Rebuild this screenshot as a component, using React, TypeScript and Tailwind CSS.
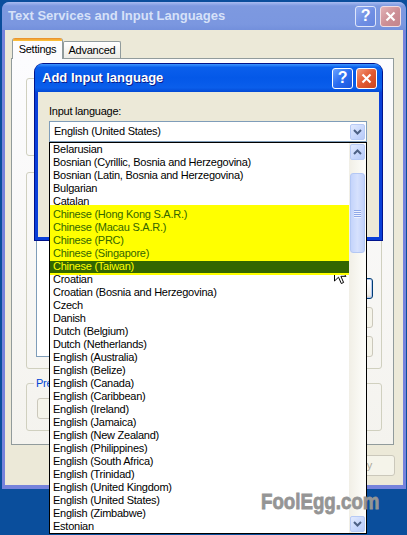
import React from "react";

const items = [
  "Belarusian",
  "Bosnian (Cyrillic, Bosnia and Herzegovina)",
  "Bosnian (Latin, Bosnia and Herzegovina)",
  "Bulgarian",
  "Catalan",
  "Chinese (Hong Kong S.A.R.)",
  "Chinese (Macau S.A.R.)",
  "Chinese (PRC)",
  "Chinese (Singapore)",
  "Chinese (Taiwan)",
  "Croatian",
  "Croatian (Bosnia and Herzegovina)",
  "Czech",
  "Danish",
  "Dutch (Belgium)",
  "Dutch (Netherlands)",
  "English (Australia)",
  "English (Belize)",
  "English (Canada)",
  "English (Caribbean)",
  "English (Ireland)",
  "English (Jamaica)",
  "English (New Zealand)",
  "English (Philippines)",
  "English (South Africa)",
  "English (Trinidad)",
  "English (United Kingdom)",
  "English (United States)",
  "English (Zimbabwe)",
  "Estonian",
];

function Chevron({ up }: { up?: boolean }) {
  return (
    <svg width="9" height="6" viewBox="0 0 9 6">
      <polyline
        points={up ? "1,5 4.5,1.5 8,5" : "1,1 4.5,4.5 8,1"}
        fill="none"
        stroke="#4d6185"
        strokeWidth="2"
      />
    </svg>
  );
}

function ScrollBtn({ up }: { up?: boolean }) {
  return (
    <div className="w-[15px] h-[16px] rounded-[2px] border border-[#b7caf5] bg-[linear-gradient(135deg,#e2eafe,#c6d6fc_60%,#b8cbf8)] flex items-center justify-center">
      <Chevron up={up} />
    </div>
  );
}

function TitleBtn({ kind, active }: { kind: "help" | "close"; active: boolean }) {
  const cls =
    kind === "help"
      ? active
        ? "bg-[linear-gradient(135deg,#6aa3ff,#2a6cf0_50%,#1b55db)] border-white"
        : "bg-[linear-gradient(135deg,#95aef0,#6f8fe4_55%,#6585df)] border-[#dfe6fa]"
      : active
      ? "bg-[linear-gradient(135deg,#f39a7a,#e35a33_50%,#c9441f)] border-white"
      : "bg-[linear-gradient(135deg,#e2b2b6,#cc8e95_55%,#c4848c)] border-[#f0dde2]";
  return (
    <div
      className={`w-[21px] h-[21px] rounded-[3px] border flex items-center justify-center ${cls}`}
    >
      {kind === "help" ? (
        <span className="text-white font-bold text-[16px] leading-[16px] font-['Liberation_Sans',Arial,sans-serif]">?</span>
      ) : (
        <svg width="11" height="11" viewBox="0 0 11 11">
          <line x1="1.5" y1="1.5" x2="9.5" y2="9.5" stroke="#fff" strokeWidth="2.2" />
          <line x1="9.5" y1="1.5" x2="1.5" y2="9.5" stroke="#fff" strokeWidth="2.2" />
        </svg>
      )}
    </div>
  );
}

function XPButton({ children, disabled, def, className = "" }: { children?: React.ReactNode; disabled?: boolean; def?: boolean; className?: string }) {
  const cls = disabled
    ? "border-[#cbc8bb] bg-[#f5f4ea] text-[#aca899]"
    : def
    ? "border-[#003c74] bg-[linear-gradient(to_bottom,#ffffff,#f0efea_80%,#d8d2c6)] text-black shadow-[inset_0_0_0_1px_#b4c8f0]"
    : "border-[#003c74] bg-[linear-gradient(to_bottom,#ffffff,#f0efea_80%,#d8d2c6)] text-black";
  return (
    <div className={`h-[21px] rounded-[3px] border flex items-center justify-center ${cls} ${className}`}>
      {children}
    </div>
  );
}

export default function App() {
  return (
    <div className="relative w-[407px] h-[535px] overflow-hidden bg-[#0a4e9c] font-['Liberation_Sans',Arial,sans-serif] text-[11px] tracking-[-0.25px] text-black">
      {/* Background window (inactive) */}
      <div className="absolute left-[2px] top-[2px] w-[404px] h-[487px] flex flex-col rounded-t-[8px] bg-[#7683dc]">
        <div className="h-[28px] shrink-0 flex items-center pl-[6px] pr-[5px] gap-[4px] rounded-t-[7px] bg-[linear-gradient(to_bottom,#a9bcf1,#7d99e0_14%,#7b97e0_80%,#7390dc)]">
          <span className="flex-1 font-bold text-[13px] tracking-normal text-[#d6e1f8]">
            Text Services and Input Languages
          </span>
          <TitleBtn kind="help" active={false} />
          <TitleBtn kind="close" active={false} />
        </div>
        <div className="flex-1 mx-[3px] mb-[4px] bg-[#ece9d8] flex flex-col pt-[8px] pl-[6px] pr-[9px]">
          {/* tabs */}
          <div className="h-[20px] flex items-end relative z-10">
            <div className="ml-[1px] w-[51px] h-[21px] -mb-[1px] border-x border-[#919b9c] rounded-t-[3px] bg-[#fcfcfe] flex flex-col">
              <div className="h-[3px] rounded-t-[2px] bg-[linear-gradient(to_bottom,#e68b2c,#ffc73c)]" />
              <div className="flex-1 flex items-center justify-center pb-[2px]">Settings</div>
            </div>
            <div className="w-[58px] h-[17px] border-x border-t border-[#919b9c] rounded-t-[2px] bg-[linear-gradient(to_bottom,#ffffff,#ecebe6)] flex items-center justify-center">
              Advanced
            </div>
          </div>
          {/* panel */}
          <div className="h-[387px] border border-[#919b9c] bg-[linear-gradient(to_bottom,#fcfcfe,#f4f3ee)] pt-[13px] pl-[14px] pr-[11px] flex flex-col">
            <fieldset className="border border-[#d0d0bf] rounded-[3px] pl-[7px] pr-[8px]">
              <legend className="px-[2px] h-[13px] w-[120px]" />
              <div className="h-[70px]" />
            </fieldset>
            <fieldset className="mt-[10px] border border-[#d0d0bf] rounded-[3px] pl-[7px] pr-[8px]">
              <legend className="px-[2px] h-[13px] w-[90px]" />
              <div className="mt-[7px] mb-[11px] h-[171px] pl-[2px] flex gap-[8px]">
                <div className="flex-1 border border-[#7f9db9] bg-white" />
                <div className="w-[75px] flex flex-col justify-end gap-[8px]">
                  <XPButton def />
                  <XPButton disabled />
                  <XPButton disabled />
                </div>
              </div>
            </fieldset>
            <fieldset className="mt-[8px] border border-[#d0d0bf] rounded-[3px] pl-[7px] pr-[8px]">
              <legend className="px-[2px] leading-[13px] text-[#0046d5]">Pre</legend>
              <div className="mt-[8px] mb-[11px] pl-[3px] flex gap-[8px]">
                <XPButton disabled className="w-[100px]" />
                <XPButton disabled className="w-[100px]" />
              </div>
            </fieldset>
          </div>
          <div className="mt-[10px] flex justify-end gap-[6px] -mr-[1px]">
            <XPButton def className="w-[75px]" />
            <XPButton className="w-[75px]" />
            <XPButton disabled className="w-[75px] justify-end pr-[22px]">y</XPButton>
          </div>
        </div>
      </div>

      {/* Foreground dialog */}
      <div className="absolute left-[35px] top-[64px] w-[347px] h-[176px] flex flex-col rounded-t-[8px] bg-[#0a3fd8] shadow-[0_0_0_1px_#00138c]">
        <div className="h-[28px] shrink-0 flex items-center pl-[7px] pr-[5px] gap-[3px] rounded-t-[7px] bg-[linear-gradient(to_bottom,#3d95ff,#0a5fec_12%,#0458e8_50%,#0a5eeb_85%,#0349d4)]">
          <span className="flex-1 font-bold text-[13px] tracking-normal text-white [text-shadow:1px_1px_#0a1d8a]">
            Add Input language
          </span>
          <TitleBtn kind="help" active />
          <TitleBtn kind="close" active />
        </div>
        <div className="flex-1 mx-[3px] mb-[3px] bg-[#ece9d8] pt-[13px] pl-[11px] pr-[12px]">
          <div className="leading-[13px]">Input language:</div>
          <div className="mt-[3px] h-[21px] border border-[#7f9db9] bg-white flex items-center p-[1px]">
            <span className="flex-1 pl-[3px]">English (United States)</span>
            <ScrollBtn />
          </div>
        </div>
      </div>

      {/* Dropdown list */}
      <div className="absolute left-[49px] top-[142px] w-[318px] h-[392px] border border-black bg-white flex">
        <div className="relative flex-1">
          {items.map((t, i) => {
            const hl = i >= 5 && i <= 8;
            const sel = i === 9;
            const cls = sel
              ? "relative z-10 bg-[#336600] text-[#ffff00] shadow-[inset_0_1px_0_#ffff00,0_2px_0_#ffff00]"
              : hl
              ? "bg-[#ffff00] text-[#336600]"
              : "";
            return (
              <div key={t} className={`h-[13px] leading-[13px] pl-[3px] whitespace-nowrap ${cls}`}>
                {t}
              </div>
            );
          })}
          <div className="absolute left-0 right-0 top-[62px] h-[3px] bg-[#ffff00]" />
        </div>
        <div className="w-[17px] flex flex-col items-center py-[1px] bg-[linear-gradient(to_right,#f1efe6,#fefefb)]">
          <ScrollBtn up />
          <div className="mt-[13px] w-[15px] h-[80px] rounded-[3px] border border-[#b4c8f4] bg-[linear-gradient(to_right,#c4d4fb,#d6e1fd_50%,#c2d2fa)] flex flex-col items-center justify-center gap-[1px]">
            {[0, 1, 2, 3].map((k) => (
              <div key={k} className="w-[7px] h-[1px] bg-[#8fa8e8] shadow-[0_1px_0_#eef2fe]" />
            ))}
          </div>
          <div className="flex-1" />
          <ScrollBtn />
        </div>
      </div>

      {/* mouse cursor */}
      <svg className="absolute left-[334px] top-[264px]" width="13" height="21" viewBox="0 0 13 21">
        <defs>
          <linearGradient id="cg" x1="0" y1="0" x2="0" y2="21" gradientUnits="userSpaceOnUse">
            <stop offset="0.47" stopColor="#ffff00" />
            <stop offset="0.48" stopColor="#ffffff" />
          </linearGradient>
        </defs>
        <path d="M0.5 0.5 V17 L4.5 13.2 L7.3 19.5 L9.6 18.5 L6.9 12.3 H12 Z" fill="url(#cg)" stroke="#000" strokeWidth="1" />
      </svg>

      {/* watermark */}
      <div className="absolute left-[261px] top-[491px] origin-left scale-x-[0.85] text-[22px] leading-[22px] font-bold tracking-normal text-[#959595] [-webkit-text-stroke:0.8px_#959595] whitespace-nowrap">
        FoolEgg.com
      </div>
    </div>
  );
}
